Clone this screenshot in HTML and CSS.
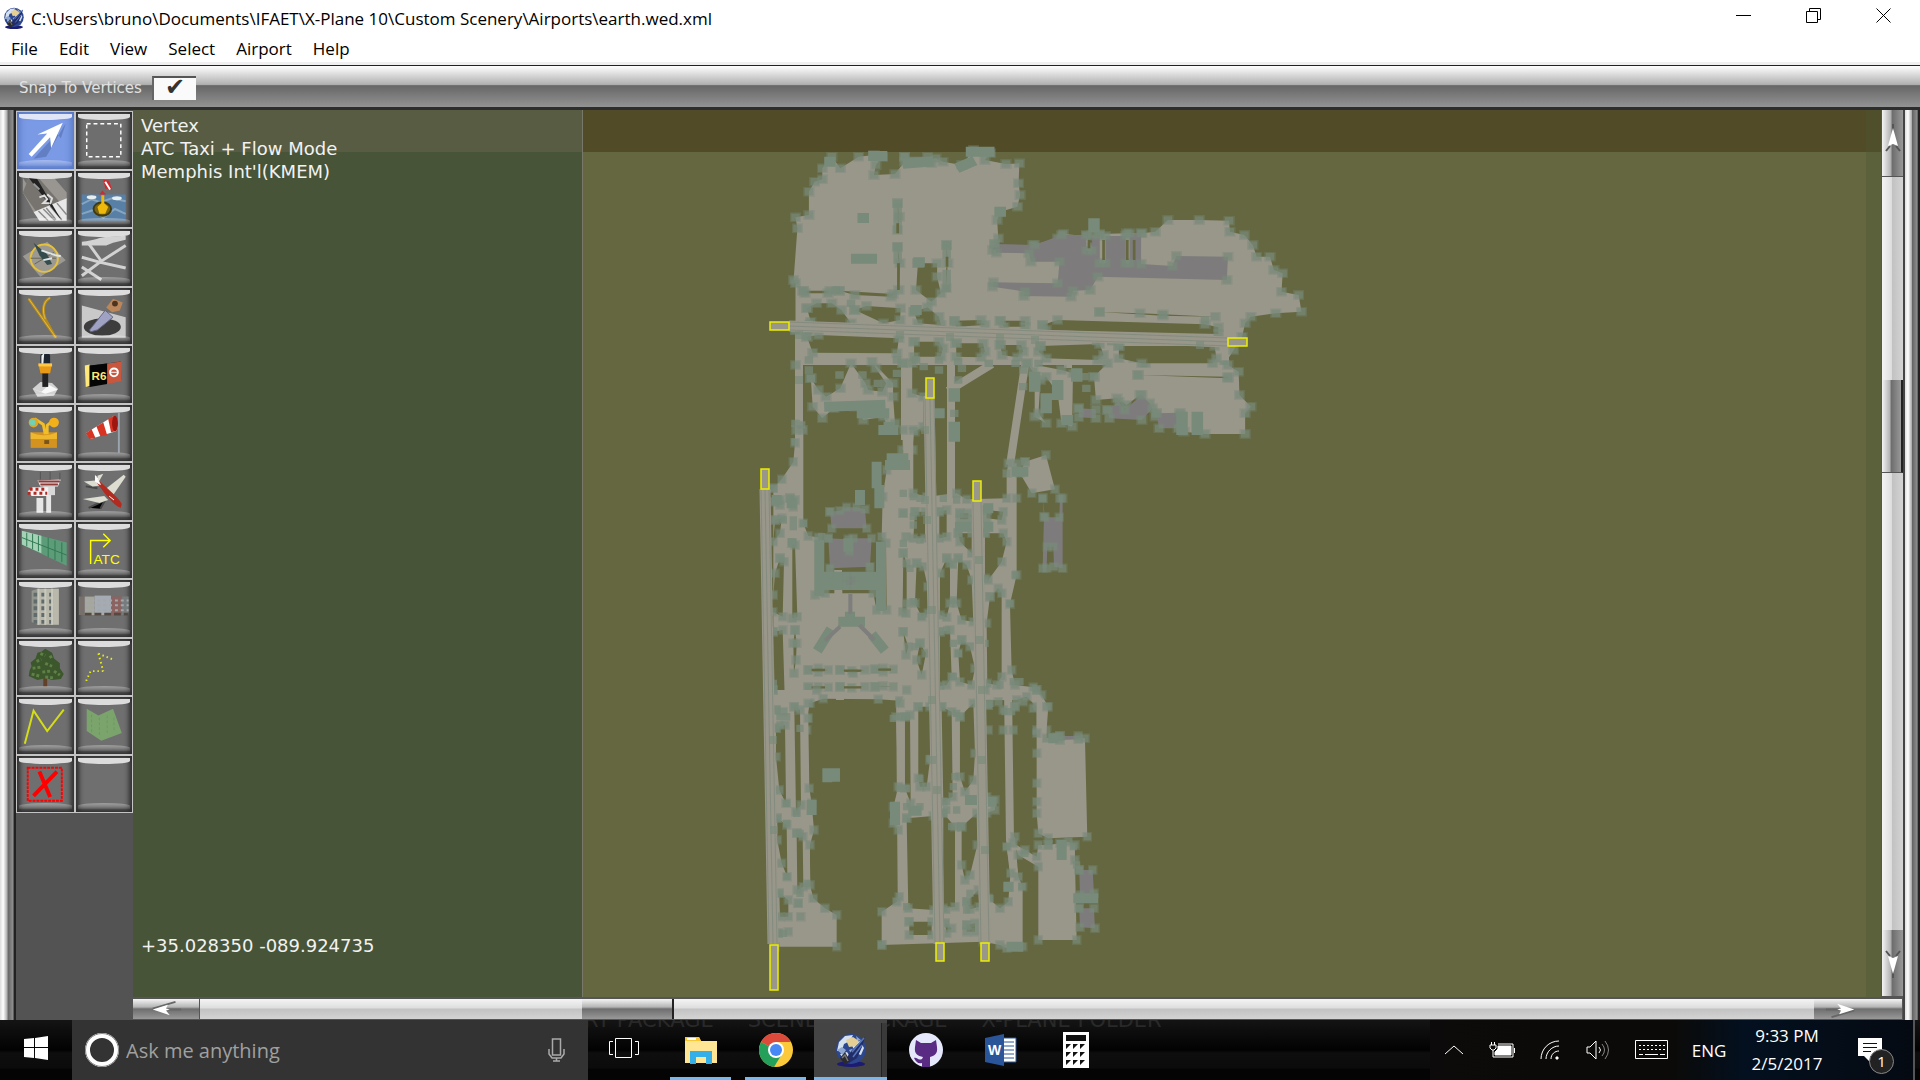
FILE: index.html
```
<!DOCTYPE html>
<html lang="en">
<head>
  <meta charset="UTF-8">
  <title>C:\Users\bruno\Documents\IFAET\X-Plane 10\Custom Scenery\Airports\earth.wed.xml</title>
  <link rel="stylesheet" href="styles.css">
</head>
<body>
  <svg class="defs" aria-hidden="true">
    <symbol id="earth" viewBox="0 0 34 34">
      <ellipse cx="17" cy="31" rx="14" ry="3" fill="#1b1b73"/>
      <circle cx="17" cy="16" r="15" fill="#2c478f"/>
      <path d="M5 9l6-6 8-1-3 6-6 3-2 6-5 1zM18 12l8-4 4 7-3 7-6-2zM6 21l7-2 3 5-4 5z" fill="#d5e0ee"/>
      <path d="M3 17l5-3 4 3-3 5zM15 17l6-2-3 7zM22 3l6 5-5-1z" fill="#8fa7d0"/>
      <path d="M12 7l7-3 6 4-3 5-7 1z" fill="#e5cf94"/>
      <path d="M31 4L18 17l-7 10 4 3 8-5 5-11z" fill="#232c66"/>
      <path d="M30 5L18 19M28 12l-9 12" fill="none" stroke="#5277be" stroke-width="1.500"/>
      <path d="M6 25l5-6 5 9-5 4z" fill="#2a2a2e"/>
      <path d="M8 25l3-3 3 6" fill="none" stroke="#777" stroke-width="1.500"/>
    </symbol>
    <symbol id="arrow-left" viewBox="0 0 40 20">
      <path d="M30 2L6 9M22 10h14" stroke="#666" stroke-width="2"/>
      <path d="M6 10l16-5-2 4 4 1-4 1 4 5z" fill="#fff"/>
    </symbol>
    <symbol id="arrow-up" viewBox="0 0 20 40">
      <path d="M10 3v9M3 30l4-5m10 5l-4-5" stroke="#555" stroke-width="2"/>
      <path d="M10 7l5 18-5-2-5 2z" fill="#fff"/>
    </symbol>
  </svg>

  <header class="titlebar">
    <svg class="app-icon"><use href="#earth"/></svg>
    <span class="title">C:\Users\bruno\Documents\IFAET\X-Plane 10\Custom Scenery\Airports\earth.wed.xml</span>
    <button class="win" aria-label="Minimize"><svg width="16" height="16"><path d="M0 7.500h15"/></svg></button>
    <button class="win" aria-label="Restore"><svg width="16" height="16"><path d="M.5 3.500h11v11h-11zM3.500 3.500v-3h11v11h-3"/></svg></button>
    <button class="win" aria-label="Close"><svg width="16" height="16"><path d="M.5.500l14 14m0-14l-14 14"/></svg></button>
  </header>

  <nav class="menu">
    <button>File</button>
    <button>Edit</button>
    <button>View</button>
    <button>Select</button>
    <button>Airport</button>
    <button>Help</button>
  </nav>

  <div class="toolbar">
    <label for="snap">Snap To Vertices</label>
    <input type="checkbox" id="snap" checked>
  </div>

  <main class="editor">
    <div class="frame left"></div>

    <div class="palette">
      <div class="tools">
        <button class="tool active" aria-label="Vertex"><svg viewBox="0 0 58 58">
          <path d="M17 48l24-26 4 5 5-15-2 3-18 31" fill="#4a63a0" opacity=".5"/>
          <path d="M12 43l19-21-10 1 26-12-12 26-1-11-19 20z" fill="#fff"/></svg></button>
        <button class="tool" aria-label="Marquee"><svg viewBox="0 0 58 58">
          <rect x="11" y="12" width="35" height="34" fill="#6e6e6e" stroke="#fff" stroke-width="1.500" stroke-dasharray="4 3"/></svg></button>
        <button class="tool" aria-label="Runway"><svg viewBox="0 0 58 58">
          <path d="M6 7l6 10-6 6v-8M12 7h26l13 15v8L17 42 6 22z" fill="#999590"/>
          <path d="M12 7h10l22 25-24 10L6 22z" fill="#777470"/>
          <path d="M17 42l34-14v23H23z" fill="#e8e8e8"/>
          <path d="M22 41l10 10m-5-12l12 12m-5-15l12 14m-5-17l10 12M30 38l10 12" stroke="#8a8a8a" stroke-width="1.500"/>
          <path d="M12 7h8l26 44-7-9z" fill="#222"/>
          <path d="M17 13l6 6" stroke="#999" stroke-width="2"/>
          <path d="M23 27l5-2 3 4-4 4 6 0m-2-9l5 4-2 6" stroke="#ddd" stroke-width="2" fill="none"/></svg></button>
        <button class="tool" aria-label="Sealane"><svg viewBox="0 0 58 58">
          <path d="M6 24h45v27H6z" fill="#587fa5"/>
          <path d="M6 34l10-5 9 3 12-4 14 3M6 44l12-4 10 8 12-9 11 5" fill="none" stroke="#86a6c0" stroke-width="2"/>
          <ellipse cx="16" cy="27" rx="5" ry="2" fill="#e8eff0"/><ellipse cx="42" cy="28" rx="5" ry="2" fill="#e8eff0"/>
          <ellipse cx="27" cy="39" rx="9" ry="7" fill="#7a6514" stroke="#413b12" stroke-width="2"/>
          <path d="M26 25h3v8l4 4-3 7h-6l-2-7 4-4z" fill="#eeb90d"/>
          <path d="M24 24l3-4 4 4zM28 9l6 1 3 9-7-1zM34 17l3 5" fill="#d8262d"/>
          <path d="M30 11l5 8" stroke="#fff" stroke-width="2"/></svg></button>
        <button class="tool" aria-label="Helipad"><svg viewBox="0 0 58 58">
          <path d="M6 28l25-15 19 19-26 17z" fill="#9b9992"/>
          <circle cx="28" cy="30" r="14" fill="none" stroke="#e6c13c" stroke-width="2"/>
          <path d="M14 30h26M18 36l20-12" stroke="#686654"/>
          <path d="M17 14l14 12 5 10-5 1-8-10z" fill="#354c4d"/>
          <path d="M25 22l15 5 5 1M27 32l9-2" stroke="#dfe6e6" stroke-width="2"/></svg></button>
        <button class="tool" aria-label="Taxiway"><svg viewBox="0 0 58 58">
          <path d="M6 13c14-1 20-6 29-5l16-1v4L38 14 31 17H6z" fill="#d2d2d2"/>
          <path d="M13 15l13 18 25-16M6 29l18 5 27 6M26 33L6 48M6 39l20 13" fill="none" stroke="#d2d2d2" stroke-width="3"/></svg></button>
        <button class="tool" aria-label="Taxiline"><svg viewBox="0 0 58 58">
          <path d="M12 11l28 40M34 10c-8 4-8 14-5 22l10 18" fill="none" stroke="#b68b1c" stroke-width="3"/>
          <path d="M12 11l28 40M34 10c-8 4-8 14-5 22" fill="none" stroke="#e5bd42"/></svg></button>
        <button class="tool" aria-label="Hole"><svg viewBox="0 0 58 58">
          <path d="M6 18l45 12v21H6z" fill="#c9c9c9"/>
          <ellipse cx="27" cy="40" rx="19" ry="9" fill="#3d3d3d"/>
          <path d="M14 43l16-20 8 7-16 13-7 2z" fill="#a0a2c4" stroke="#646683"/>
          <path d="M31 20l7-9 10 4-3 8-8 2z" fill="#bb865a"/><circle cx="40" cy="16" r="3" fill="#4d3421"/></svg></button>
        <button class="tool" aria-label="Tower Viewpoint"><svg viewBox="0 0 58 58">
          <path d="M16 44l8-7 12 1 6 6-4 7-17 1z" fill="#d2d2d2"/>
          <path d="M16 44l9 3 8-7 9 5-13 4z" fill="#f8f8f8"/>
          <path d="M26 28h6v14h-6z" fill="#222"/>
          <path d="M24 10c1-4 10-4 10 0v11H24z" fill="#1d2630"/><path d="M25 10l3-3-1 12h-2z" fill="#eee"/>
          <path d="M22 18h14l-2 10H24z" fill="#e89a16"/><path d="M22 18h14v3H22z" fill="#ffc746"/></svg></button>
        <button class="tool" aria-label="Sign"><svg viewBox="0 0 58 58">
          <path d="M9 21l37-5 1 19-35 7z" fill="#303030"/>
          <path d="M9 20l5-1v22l-4 1z" fill="#ffe879"/>
          <path d="M14 20l18-2v21l-18 3z" fill="#050505"/>
          <path d="M32 18l15-2v20l-15 3z" fill="#c9573d"/>
          <text x="16" y="35" class="r6">R6</text>
          <circle cx="39" cy="27" r="4" fill="none" stroke="#fff" stroke-width="2"/><path d="M36 27h6" stroke="#fff"/></svg></button>
        <button class="tool" aria-label="Beacon"><svg viewBox="0 0 58 58">
          <path d="M14 28h27v16H14z" fill="#d3931e"/><path d="M14 28c8 4 19 4 27 0v7H14z" fill="#eeb72d"/>
          <path d="M18 14l9 6 2 10M37 16l-6 5v9" stroke="#f2bd26" stroke-width="3" fill="none"/>
          <circle cx="17" cy="18" r="5" fill="#dea725"/><circle cx="16" cy="18" r="3" fill="#6dd2b7"/>
          <circle cx="38" cy="18" r="5" fill="#f2b01b"/><rect x="28" y="36" width="5" height="4" fill="#78541c"/></svg></button>
        <button class="tool" aria-label="Windsock"><svg viewBox="0 0 58 58">
          <path d="M44 8v41" stroke="#9aa5b0" stroke-width="2"/>
          <path d="M10 29l29-18c5 2 5 12 2 16l-26 8z" fill="#fff"/>
          <path d="M10 29l6-4 4 9-6 1zM21 22l7-4 4 13-7 1zM33 14l6-3c5 2 5 12 2 16l-5 1z" fill="#d83424"/>
          <ellipse cx="40" cy="19" rx="3" ry="8" fill="#9d1710"/></svg></button>
        <button class="tool" aria-label="Airport Buildings"><svg viewBox="0 0 58 58">
          <path d="M20 36h7v15h-7zM30 30h5v21h-5z" fill="#e6e6e6"/>
          <path d="M27 24h12v9H27z" fill="#d8d8d8"/>
          <path d="M21 18l24-1-3 7H24z" fill="#efefef"/><path d="M22 19h22M24 22h18" stroke="#8f3b36" stroke-width="2"/>
          <path d="M24 9v8m10-8v8m10-7v7" stroke="#555"/>
          <path d="M11 29l5-4h16v9H15z" fill="#f3f3f3"/><path d="M13 27h18m-20 4h20" stroke="#b42822" stroke-width="3" stroke-dasharray="3 3"/></svg></button>
        <button class="tool" aria-label="Ramp Start"><svg viewBox="0 0 58 58">
          <path d="M13 46l17-8-5 9M10 24l12 2" stroke="#484848" stroke-width="2"/>
          <path d="M8 19l12-1 5 5-8 1zM22 13l6-2-5 9zM30 27l19-15 2 2-13 19zM7 37l22-3 4 4-9 3z" fill="#ddddd2"/>
          <path d="M20 13c2 6 23 20 27 29l-1 4c-8-2-19-18-26-28z" fill="#b22b20"/>
          <path d="M20 13c3 3 3 6 5 9l-5-3zM34 34l5 4" fill="#fff" stroke="#fff"/></svg></button>
        <button class="tool" aria-label="Facade"><svg viewBox="0 0 58 58">
          <path d="M5 9l46 12v24L5 23z" fill="#5c9c79"/>
          <path d="M5 9l20 5v18L5 23z" fill="#a5d1b6"/>
          <path d="M10 11v14m6-13v16m6-14v16m10-14v20m7-17v20m7-18v20M5 16l46 18" stroke="#307850"/></svg></button>
        <button class="tool" aria-label="ATC Taxi + Flow"><svg viewBox="0 0 58 58">
          <path d="M15 43V19h20M28 12l7 7-7 7" fill="none" stroke="#ff0" stroke-width="1.500"/>
          <text x="18" y="43" class="atc">ATC</text></svg></button>
        <button class="tool" aria-label="Object"><svg viewBox="0 0 58 58">
          <path d="M15 11l6-2v37l-6-3z" fill="#92958d"/><path d="M21 9h22v37H21z" fill="#b9b8ab"/>
          <path d="M17 15h24m-24 7h24m-24 7h24m-24 7h24m-24 7h24" stroke="#616b6c" stroke-width="4" stroke-dasharray="4 4"/>
          <path d="M22 9v37m7-37v37m7-37v37" stroke="#c8c9bf" stroke-width="2"/></svg></button>
        <button class="tool" aria-label="Autogen"><svg viewBox="0 0 58 58">
          <path d="M3 17h50v19H3z" fill="#776f6c"/><path d="M9 17h10v19H9z" fill="#a5a79c"/>
          <path d="M19 16h17v20H19z" fill="#a5abb2"/><path d="M36 17h11v19H36z" fill="#8b6360"/><path d="M47 17h7v19h-7z" fill="#777d7f"/>
          <path d="M10 21h44M10 26h44M10 31h44" stroke="#a4a8aa" stroke-width="2" stroke-dasharray="3 3"/>
          <path d="M9 35h45" stroke="#554a42" stroke-width="3" stroke-dasharray="7 3"/></svg></button>
        <button class="tool" aria-label="Forest"><svg viewBox="0 0 58 58">
          <path d="M27 38h4v11h-4z" fill="#62412b"/>
          <path d="M29 10l7 4 2 6 6 5v5l4 6-3 5-9 1-6-2-9 2-9-4 1-6 2-4-1-4 5-4 2-6 4-1z" fill="#3c572b"/>
          <path d="M24 15l5 2m5 0l2 4m-16 2l5-2m4 4l7 3m-20 2l8-1m2 5l8-1m4 0l6 4m-29-1l8 2m6 1l9 1" stroke="#5f8047" stroke-width="3" stroke-dasharray="3 2"/></svg></button>
        <button class="tool" aria-label="String"><svg viewBox="0 0 58 58">
          <path d="M23 15l15 6M23 15l5 18M28 33H15l-5 11" fill="none" stroke="#e8ee1a" stroke-width="2" stroke-dasharray="1.500 3"/></svg></button>
        <button class="tool" aria-label="Line"><svg viewBox="0 0 58 58">
          <path d="M8 48l9-34 14 21 17-22" fill="none" stroke="#d4dd16" stroke-width="2"/></svg></button>
        <button class="tool" aria-label="Polygon"><svg viewBox="0 0 58 58">
          <path d="M11 12l12 7 15-7 9 25-21 8-15-10z" fill="#7ba46d"/>
          <path d="M16 18v18m8-15v20m8-22v20m7-18v14" stroke="#6c9860" stroke-dasharray="3 2"/></svg></button>
        <button class="tool" aria-label="Exclusion"><svg viewBox="0 0 58 58">
          <rect x="11" y="12" width="35" height="34" fill="none" stroke="#f00" stroke-width="2" stroke-dasharray="3 1"/>
          <path d="M23 16l11 26M41 16L17 41" fill="none" stroke="#f00" stroke-width="4"/></svg></button>
        <button class="tool" aria-label="Empty"></button>
      </div>
    </div>

    <aside class="info">
      <p>Vertex<br>ATC Taxi + Flow Mode<br>Memphis Int'l(KMEM)</p>
      <p>+35.028350 -089.924735</p>
    </aside>

    <div class="map">
      <svg viewBox="583 110 1298 887" preserveAspectRatio="xMinYMin meet">
        <defs>
          <marker id="v" markerUnits="userSpaceOnUse" markerWidth="30" markerHeight="30" refX="15" refY="15">
            <rect width="30" height="30" class="halo"/><rect x="4" y="4" width="22" height="22" class="vertex"/>
          </marker>
        </defs>

        <!-- taxiways -->
        <g class="strips">
          <path class="taxi" d="M799 330v120M905 260v180M951 600v100M951 260v240M838 570l2 130M1025 365l-15 100M992 364l-44 27M1068 330v38M1110 330v38M1225 330v38M789 540l3 400M803 690l4 230M900 690l2 240M914 690l1 120M956 690l2 230M1008 690l2 150 8 70"/>
        </g>

        <!-- north side -->
        <g transform="translate(740 130) scale(.3827 .3333)" marker-start="url(#v)" marker-mid="url(#v)" marker-end="url(#v)">
          <path class="pave" d="M145 600V460L140 450 150 295 145 262 180 255 180 185 195 155 215 148 215 115 240 80 262 115 310 80 350 75 372 82 355 105 350 135 405 132 430 95 470 95 512 85 530 95 580 105 610 60 655 70 640 90 695 102 730 100 728 160 732 195 725 230 680 245 672 270 675 325 660 360 765 345 830 325 845 312 905 318 920 350 940 312 1010 310 1050 310 1085 305 1118 270 1200 270 1278 272 1280 305 1318 315 1340 345 1350 380 1385 380 1395 420 1418 430 1415 485 1460 495 1467 545 1400 550 1335 560 1320 580 1312 620 1290 660 1265 705H145z"/>
          <path class="pave" d="M925 740L960 700 1030 685 1060 700 1275 705 1303 725 1305 795 1335 830 1320 850 1320 912H1215L1160 905 1150 855 1085 860 1070 820 1045 795 1010 825 985 805 930 810z"/>
          <path class="pave" d="M185 745L205 780 225 800 262 775 290 700 328 760 335 780 372 785 382 760 355 715 345 695 400 760 400 800 405 880 388 900 375 860 322 870 300 830 245 835 215 865 190 830z"/>
          <path class="pave" d="M425 700H450L450 790 480 800 480 890 455 905 450 960H425z"/>
          <path class="pave" d="M750 700L840 720 870 730 868 890 840 880 830 790 800 740 785 750 780 850 800 880 770 860 770 770 765 725z"/>
          <path class="hole" d="M465 400L515 400 515 440 525 490 500 515 460 480zM165 482L235 482 230 490 170 490zM260 482L400 492 395 500 300 495zM175 535L200 520 240 520 265 540 290 580 185 575zM300 540L330 528 420 535 418 570 375 580zM455 545L490 532 520 560 525 585 465 580zM560 572L630 570 640 585 565 590zM680 572L745 572 745 590 690 590zM790 585L830 570 1215 583 1250 592 1250 612 800 600z"/>
          <path class="hole" d="M175 620L205 615 415 625 410 670 190 668zM455 635L520 635 530 655 525 680 455 680zM565 640L635 640 640 665 630 682 565 680zM680 645L735 645 740 665 725 682 685 675zM785 648L940 642 950 675 935 690 800 685 780 665zM990 648L1240 648 1245 685 1235 700 1050 700 990 685zM940 546L1045 550 1105 553 1242 560 1105 557zM1040 735L1275 740 1275 745zM412 220L416 260 412 300zM412 350L418 400 415 480zM540 345L543 400 538 475z"/>
          <path class="building" d="M665 342L770 345 840 315H905V362H920V315H940V400H955V318H1008V400H1018V310H1048V402L1130 408 1140 378 1275 380 1272 450 935 440 915 480 870 482 865 500 742 498 745 485 660 470 662 457 830 460 835 395 760 395 755 370 670 368z"/>
          <path class="building" d="M885 835L930 838 930 865 885 862zM960 840L990 815 1005 840 1050 795 1078 835 1050 870 965 865zM1088 850L1150 848 1145 895 1095 895zM430 80L490 80 500 100 440 100z"/>
          <path class="clump" d="M322 264h0M305 386h38M468 397h0M925 280v12M680 245h0M350 78h20M605 65h45M440 100l50-5M580 108l20-10M235 830l130-5M320 850h55M390 890h0M770 740v30M800 805v30M830 765v30M855 870h0M880 730v10M1155 860v40M1195 860v40M235 95h0M460 540h0M560 790v10M520 850h0M560 890v30"/>
          <path class="ticks" d="M180 720h0M180 600h0M180 580h0M180 690h0M250 480h0M290 520h0M420 600h0M460 600h0M540 600h0M580 600h0M660 605h0M720 610h0M770 615h0M800 615h0M410 690h0M460 690h0M520 690h0M570 695h0M650 700h0M720 700h0M780 700h0M480 710h0M520 720h0M580 715h0M570 750h0M740 720h0M740 770h0M560 850h0M145 880h0M160 885h0M145 935h0M1215 570h0M1215 640h0M970 635h0M930 635h0M412 230v70M412 350v40M540 345v30M540 430v45M900 740h0M905 775h0M260 735h0M320 735h0M410 730h0M360 760h0"/>
          <path class="holeline" d="M950 330v60M1012 330v60M1030 330v60M912 330v25M412 280v30M414 400v80M541 380v30"/>
        </g>

        <!-- terminal -->
        <g transform="translate(740 430) scale(.3333)" marker-start="url(#v)" marker-mid="url(#v)" marker-end="url(#v)">
          <path class="pave" d="M100 175L125 148 160 95 165 38 168 0 190 0 190 280 205 318 235 322 225 495 255 490 400 490 410 540 440 540 438 340 425 320 428 200 440 120 490 100 490 0 520 0 520 190 560 200 650 190 680 208 800 205 800 130 805 100 830 100 830 205 830 435 810 522 815 720 825 765 880 772 905 795 925 830 920 900 890 900 890 830 860 800 830 810 480 812 415 808 250 806 210 820 200 865V900H100z"/>
          <path class="hole" d="M105 215L120 210 120 225zM150 205L165 210 160 230zM105 270L125 265 120 310 100 335zM120 385L132 395 128 560 98 545 100 495 105 430zM157 340L165 345 172 560 157 565zM100 605L128 600 135 830 105 835zM165 600L170 640 168 690 162 730 160 640zM158 845L175 840 180 900 162 900zM120 860L130 885zM490 250L498 320zM490 370L500 400 500 520 498 550 488 545zM525 245L555 245 555 325 520 325zM530 400L550 410 563 470 565 550 545 560 525 520zM490 605L505 650 498 675zM540 640L558 670 545 735 530 690zM598 245L620 240 620 320 598 325zM620 385L630 400 630 520 620 562 600 555 600 430zM655 385L680 405 695 450 700 575 665 570 650 520zM655 310H695V370L660 335zM660 250L685 250 685 268 660 268zM740 240L790 245 785 270 740 265zM735 310L790 310 800 335 785 395 745 450 735 445zM750 500L775 475 785 490 785 740 770 765 742 760 740 580zM600 605L630 600 635 740 620 765 600 768zM665 630L690 650 705 715 695 765 660 755 655 670z"/>
          <path class="hole" d="M600 830L620 815 635 830 640 900 605 900zM660 830L690 815 705 840 708 900 660 900zM745 825L775 815 790 840 790 900 745 900zM825 830L850 815 880 835 890 900 820 900zM535 830L560 815 570 900 535 900zM490 830L505 825 505 900 490 900z"/>
          <path class="hole" d="M205 720L235 715 265 720 235 727zM300 720L335 722 375 720 340 730zM405 718L430 715 460 718 430 725zM205 772L235 770 265 772zM300 770L335 773 375 770zM405 770L430 768 460 770z"/>
          <path class="holeline" d="M215 720h40M312 722h52M415 719h38M215 772h40M312 772h52"/>
          <path class="building" d="M270 245L300 242 320 232 350 232 375 238 380 295 275 295zM265 325L325 328 328 365 340 325 395 325 390 410 270 415z"/>
          <path class="building" d="M908 205L912 260 908 415 920 415 922 350 940 350 942 410 968 415 968 205 960 205 958 262 915 262z"/>
          <path class="pave" d="M855 95L918 75 945 178 875 190 840 130z"/>
          <path class="clump" d="M238 345v138M423 350v178M265 440h130M265 465h130M330 560l0 5M310 575h50M265 610l-25 40M405 625l20 25M455 85h35M450 105h45M410 110v50M418 180v40M830 125h20M745 290h0M745 235h0M660 290h20M360 195v15M110 210h0M155 220h0M430 0h30M325 340v10"/>
          <path class="ticks" d="M490 190h0M520 200h0M540 205h0M610 205h0M650 210h0M520 260h0M520 285h0M490 340h0M130 270h0M160 270v20M190 280h0M155 335h0M540 330h0M510 415h0M580 380h0M640 405h0M640 510h0M520 515h0M620 600h0M545 560h0M525 650h0M640 640h0M655 670h0M640 740h0M810 520h0M825 435h0M170 820h0M200 865h0M490 825h0M510 830h0M460 865h0M640 850h0M600 820h0M670 820h0M750 820h0M820 755h20M780 765h0M100 760h0M245 320h0M270 415v20M390 410v20M110 860h20M110 890h20M735 640h0"/>
          <path class="building" d="M318 440h28v25h-28z"/>
          <path class="road" d="M331 492v60M300 590l-45 42M358 585l45 45"/>
        </g>

        <!-- south side -->
        <g transform="translate(740 690) scale(.3333)" marker-start="url(#v)" marker-mid="url(#v)" marker-end="url(#v)">
          <path class="pave" d="M100 0H230L205 40 205 85 208 295 215 340 222 420 210 465 210 585 220 625 255 655 290 675 290 770H105z"/>
          <path class="pave" d="M425 765V665L470 635 478 620 475 420 460 400 460 350 475 290 468 80 480 40 500 0H735L740 320 765 330 765 360 740 370 745 625 780 655 805 635 808 590 812 550 800 470 825 440 835 560 848 590V770L800 775 780 765 730 755z"/>
          <path class="pave" d="M890 0L920 50 920 145 950 140 1035 145 1042 440 925 445 895 430 890 370 890 335 890 280 890 190 890 130z"/>
          <path class="pave" d="M925 465L960 460 985 455 1005 465 1005 510 1010 750H895L895 530 835 495 820 460 855 480 890 500 895 465z"/>
          <path class="hole" d="M108 60L130 65zM108 115L135 105 138 340 118 300 108 200zM163 50L180 60 183 345 168 365zM112 385L140 405 142 560 125 520 112 450zM170 430L188 440 190 590 172 600zM118 610L145 630 145 680 120 680zM115 730L145 725zM175 640L182 680z"/>
          <path class="hole" d="M495 80L510 75 512 340 495 295zM500 385L580 378 582 660 505 655zM535 50L570 50 570 210 560 290 540 290 535 265zM605 50L635 65 638 320 610 335zM660 80L700 40 705 190 700 270 675 305 660 260zM610 370L645 410 645 650 610 655zM665 410L710 370 712 465 690 555 675 570 665 525zM680 635L715 600 718 650 690 658zM508 695L575 695 575 735 508 735zM615 700L635 715 620 730zM680 705L705 700 705 725 680 725z"/>
          <path class="building" d="M1018 540L1058 540 1062 610 1020 615zM1018 655L1062 655 1065 715 1020 712zM960 138L1015 138 1015 148 960 150z"/>
          <path class="clump" d="M262 250v12M285 250v10M1015 625h45M965 465v30M940 145h0M215 345v15M465 350v40M755 335h0M690 330h20M520 362h10M805 590h0M815 770h20"/>
          <path class="ticks" d="M120 80h20M120 105h0M180 115h0M140 340h0M170 370h0M140 400h0M180 430h0M140 560h0M180 610h0M200 580h0M130 730h0M480 295h20M480 80h20M540 265h0M650 70h0M645 260h0M570 205h0M640 290h0M620 335h0M620 360h0M660 410h0M635 410h0M500 350h0M540 350h0M650 360h0M500 650h0M620 660h0M690 610h0M680 660h0M795 65h20M800 470h0M855 490h0M845 590h0M1010 525h0M1000 470h0M750 625h0"/>
        </g>

        <!-- runways -->
        <g class="strips">
          <path class="runway" d="M789 326l440 16M765 489l8 455M929 396l10 548M977 499l8 445"/>
          <path class="edge" d="M789 322l440 16M789 326l440 16M789 330l440 16M761 489l8 455M765 489l8 455M769 489l8 455M925 398l10 546M930 398l10 546M934 398l10 546M973 501l8 443M981 501l8 443"/>
          <path class="dots" d="M799 335v0M799 380v0M773 740v0M774 830v0M925 430v0M925 500v0M927 520v0M932 610v0M932 700v0M932 760v0M937 790v0M979 560v0M979 640v0M982 690v0M982 760v0M985 850v0M900 335v0M950 337v0M1000 338v0M1035 340v0M1200 345v0"/>
        </g>
        <path class="end" d="M770 322h19v8h-19zM1228 338h19v8h-19zM926 378h8v20h-8zM761 469h8v20h-8zM973 481h8v20h-8zM770 945h8v45h-8zM936 943h8v18h-8zM981 943h8v18h-8z"/>
      </svg>
      <div class="east"></div>
    </div>

    <div class="vscroll">
      <button aria-label="Scroll up"><svg><use href="#arrow-up"/></svg></button>
      <span class="track a"></span>
      <span class="thumb"></span>
      <span class="track b"></span>
      <button class="down" aria-label="Scroll down"><svg><use href="#arrow-up"/></svg></button>
    </div>
    <div class="frame right"></div>

    <div class="hscroll">
      <button aria-label="Scroll left"><svg><use href="#arrow-left"/></svg></button>
      <span class="track a"></span>
      <span class="thumb"></span>
      <span class="track b"></span>
      <button class="next" aria-label="Scroll right"><svg><use href="#arrow-left"/></svg></button>
    </div>
  </main>

  <footer class="taskbar">
    <div class="behind"><span>RY PACKAGE</span><span>SCENERY PACKAGE</span><span>X-PLANE FOLDER</span></div>
    <button class="start" aria-label="Start"><svg width="24" height="24"><path d="M0 3l10-1v9H0zM11 2l13-2v11H11zM0 12h10v10L0 21zM11 12h13v12l-13-2z" fill="#fff"/></svg></button>
    <div class="search">
      <span class="cortana"></span>
      <input type="text" placeholder="Ask me anything" aria-label="Ask me anything">
      <svg width="18" height="24"><path d="M4.500 1h8v16h-8zM1 11v5l3 4h9l3-4v-5M8.500 20v3M5 23h7" fill="none" stroke="#aaa" stroke-width="1.500"/></svg>
    </div>
    <button class="taskview" aria-label="Task View"><svg width="30" height="20"><path d="M6.500.500h16v19h-16zM4 3.500H.500v13H4M26 3.500h3.500v13H26" fill="none" stroke="#fff"/></svg></button>
    <div class="apps">
      <button class="running" aria-label="File Explorer"><svg width="34" height="28"><path d="M1 1h14l2 4h16v22H1z" fill="#ffe694"/><path d="M1 1h14l2 4H1z" fill="#fbc633"/><path d="M3 3h9" stroke="#fff" stroke-width="2"/><path d="M6 28V15h22v13h-6v-7H12v7z" fill="#35afe8"/></svg></button>
      <button class="running" aria-label="Chrome"><svg width="34" height="34" viewBox="0 0 34 34"><circle cx="17" cy="17" r="17" fill="#fbc93a"/><path d="M17 17L2 9a17 17 0 0 1 30 0H17z" fill="#dc4a3c"/><path d="M2 9a17 17 0 0 0 13 25l8-13-6-4z" fill="#24a05b"/><path d="M17 9h15L24 6z" fill="#dc4a3c"/><circle cx="17" cy="17" r="8" fill="#fff"/><circle cx="17" cy="17" r="6" fill="#4688f4"/></svg></button>
      <button class="running current" aria-label="WorldEditor"><svg width="34" height="34"><use href="#earth"/></svg></button>
      <button aria-label="GitHub"><svg width="34" height="34" viewBox="0 0 34 34"><circle cx="17" cy="17" r="17" fill="#e5e8fb"/><path d="M7 7l5 3h10l5-3 1 7c1 7-3 9-7 10v10h-8v-4c-4 1-6-1-8-5 3-1 4 3 8 1l1-2c-5-1-9-3-8-10z" fill="#5a2b83"/></svg></button>
      <button aria-label="Word"><svg width="32" height="32" viewBox="0 0 32 32"><path d="M17 4h14v24H17z" fill="#fff" stroke="#2a5699"/><path d="M19 8h10m-10 4h10m-10 4h10m-10 4h10m-10 4h10" stroke="#2a5699"/><path d="M0 4l19-4v32L0 28z" fill="#2a5699"/><text x="3" y="21" class="w">W</text></svg></button>
      <button aria-label="Calculator"><svg width="26" height="36" viewBox="0 0 26 36"><path d="M0 0h26v36H0z" fill="#fff"/><path d="M3 3h20v6H3zM3 12h5l-5 5zM10 12h5l-5 5zM17 12h5l-5 5zM3 20h5l-5 5zM10 20h5l-5 5zM17 20h5l-5 5zM3 28h5l-5 5zM10 28h5l-5 5zM17 28h5l-5 5z" fill="#111"/></svg></button>
    </div>
    <div class="tray">
      <button aria-label="Show hidden icons"><svg width="20" height="12"><path d="M1 10l9-8 9 8"/></svg></button>
      <button aria-label="Battery"><svg width="26" height="20"><path d="M1 5h6v3l-2 2H3L1 8zM2.500 2v3m3-3v3M4 10v7h20V4H9M25.500 8v5"/><path d="M9 6h13v9H6v-3l3-3z" fill="#fff"/></svg></button>
      <button aria-label="Network"><svg width="20" height="20"><path d="M1 19C1 9 9 1 19 1M6 19C6 12 12 6 19 6M11 19c0-5 4-8 8-8"/><path d="M16 17h2v2h-2z" fill="#fff"/></svg></button>
      <button aria-label="Volume"><svg width="24" height="20"><path d="M1 7h3l6-6v18l-6-6H1zM13 7q3 3 0 6"/><path d="M16 4q5 6 0 12M19 1q7 9 0 18" opacity=".5"/></svg></button>
      <button aria-label="Touch keyboard"><svg width="34" height="20"><path d="M.5.500h32v18H.500z"/><path d="M4 5.500h26M4 9.500h26" stroke-dasharray="2 2"/><path d="M4 14.500h4m2 0h13m2 0h5"/></svg></button>
      <button>ENG</button>
      <button class="clock">9:33 PM<br>2/5/2017</button>
      <button class="notes" aria-label="Notifications"><svg width="24" height="24"><path d="M0 0h24v18H12v6l-6-6H0z" fill="#fff" stroke="none"/><path d="M5 5.500h14M5 9.500h14M5 13.500h8" stroke="#111"/></svg><span class="badge">1</span></button>
    </div>
  </footer>
</body>
</html>
```
FILE: styles.css
```
* {
  box-sizing: border-box;
}
body {
  margin: 0;
  height: 100vh;
  display: flex;
  flex-direction: column;
  overflow: hidden;
  background: #fff;
  font-family: "Open Sans", "Noto Sans", sans-serif;
}
button {
  padding: 0;
  border: none;
  background: none;
  color: inherit;
  font: inherit;
}
p {
  margin: 0;
}
.defs {
  position: absolute;
  width: 0;
  height: 0;
}

/* window title and menu */
.titlebar {
  display: flex;
  align-items: center;
  height: 35px;
  padding-left: 3px;
  flex: none;
}
.app-icon {
  width: 22px;
  height: 22px;
}
.title {
  flex: 1;
  padding: 2px 0 0 6px;
  font-size: 17px;
  white-space: nowrap;
}
.win {
  width: 70px;
  height: 34px;
}
.win:last-child {
  margin-right: 1px;
}
.win svg {
  fill: none;
  stroke: #000;
}
.menu {
  display: flex;
  align-items: center;
  gap: 21px;
  height: 30px;
  padding-left: 11px;
  border-bottom: 3px solid #f0f0f0;
  font-size: 17px;
  line-height: 24px;
  flex: none;
}

/* snap bar */
.toolbar {
  display: flex;
  align-items: center;
  gap: 10px;
  height: 45px;
  padding: 3px 0 0 19px;
  border-top: 1px solid #222;
  border-bottom: 3px solid #2d2d2d;
  background: linear-gradient(#fff, #b0b0b0 45%, #666 48%, #939393);
  color: #e2e2e2;
  font: 15px "DejaVu Sans", sans-serif;
  flex: none;
}
.toolbar input {
  appearance: none;
  width: 44px;
  height: 24px;
  margin: 0;
  border-top: 2px solid #555;
  border-left: 2px solid #666;
  background: #fafafa;
  color: #333;
  font-size: 24px;
  line-height: 18px;
  text-align: center;
}
.toolbar input:checked::after {
  content: "✔";
}

/* editor area */
.editor {
  display: grid;
  grid-template-columns: 16px 117px 450px 1fr 22px 17px;
  grid-template-rows: 1fr 23px;
  flex: 1;
  min-height: 0;
}
.frame {
  grid-row: 1 / 3;
  background: linear-gradient(90deg, #ddd, #fff 20%, #aaa 45%, #666 50%, #8e8e8e 80%, #222 90%);
}
.frame.left {
  grid-column: 1;
}
.frame.right {
  grid-column: 6;
  grid-row: 1 / 3;
  border-left: 2px solid #444;
}
.palette {
  grid-column: 2;
  grid-row: 1 / 3;
  background: #535353;
}
.tools {
  display: grid;
  grid-template-columns: 1fr 1fr;
  padding-top: 1px;
}
.tool {
  position: relative;
  aspect-ratio: 1;
  border: 1px solid #c4c4c4;
  background: #6f6f6f;
  box-shadow: inset 0 0 5px 3px #2c2c2c;
}
.tool.active {
  background: #7b9ae6;
  box-shadow: inset 0 0 7px 2px #5372bd;
}
.tool svg {
  display: block;
  width: 100%;
  height: 100%;
}
.tool::before, .tool::after {
  content: "";
  position: absolute;
  left: 2px;
  right: 2px;
  height: 6px;
}
.tool::before {
  top: 2px;
  border-radius: 0 0 50% 50%;
  background: #dcdcdc;
}
.tool::after {
  bottom: 3px;
  border-radius: 50% 50% 0 0;
  background: linear-gradient(#fff5, #fff1);
}
.tool.active::before {
  background: #e0e6f8;
}
.r6 {
  fill: #ffe879;
  font: bold 12px "Liberation Sans", sans-serif;
}
.atc {
  fill: #ff0;
  font: 14px "Liberation Sans", sans-serif;
}

.info {
  display: flex;
  flex-direction: column;
  justify-content: space-between;
  padding: 4px 8px 40px;
  border-right: 1px solid #777868;
  background: linear-gradient(#585c43 42px, #475437 42px);
  color: #f2f2f2;
  font: 18px/23px "DejaVu Sans", sans-serif;
}
.map {
  position: relative;
  overflow: hidden;
  background: linear-gradient(#514b28 42px, #64673f 42px);
}
.map svg {
  display: block;
  width: 100%;
}
.east {
  position: absolute;
  top: 0;
  right: 0;
  bottom: 0;
  width: 15px;
  background: #4a5a3455;
}
.pave {
  fill: #99968a;
}
.hole {
  fill: #64673f;
}
.building {
  fill: #7e7b7c;
}
.vertex {
  fill: #788a7a;
  opacity: .6;
}
.halo {
  fill: #788a7a;
  opacity: .35;
}
.clump, .ticks {
  fill: none;
  stroke: #788a7a;
  stroke-width: 30;
  stroke-linecap: square;
  marker: none;
}
.ticks {
  stroke-width: 22;
  opacity: .75;
}
.holeline {
  fill: none;
  stroke: #64673f;
  stroke-width: 7;
  marker: none;
}
.road {
  fill: none;
  stroke: #7e7f7c;
  stroke-width: 12;
  marker: none;
}
.strips {
  fill: none;
  stroke: #99968a;
}
.taxi {
  stroke-width: 8;
}
.runway {
  stroke-width: 11;
}
.edge {
  stroke: #848c7f;
  stroke-width: 1;
}
.dots {
  stroke: #788a7a;
  stroke-width: 8;
  stroke-linecap: square;
  opacity: .6;
}
.end {
  fill: #99968a;
  stroke: #ee0;
  stroke-width: 1.500;
}

/* scroll bars */
.vscroll, .hscroll {
  --track: #f4f4f4, #dedede 45%, #c2c2c2 50%, #d4d4d4;
  --metal: #f4f4f4, #b5b5b5 40%, #6e6e6e 50%, #999;
  display: flex;
  border: 1px solid #555;
}
.vscroll {
  flex-direction: column;
  border-width: 0 0 0 1px;
  background: linear-gradient(90deg, var(--track));
}
.hscroll {
  grid-column: 3 / 6;
  grid-row: 2;
  border-width: 2px 0 1px;
  background: linear-gradient(var(--track));
}
.vscroll button, .vscroll .thumb {
  background: linear-gradient(90deg, var(--metal));
  border-bottom: 1px solid #555;
}
.hscroll button, .hscroll .thumb {
  background: linear-gradient(var(--metal));
  border-right: 1px solid #555;
}
.vscroll button {
  height: 67px;
}
.vscroll svg {
  width: 20px;
  height: 40px;
}
.vscroll .thumb {
  height: 93px;
  border-right: 2px solid #222;
}
.vscroll .a {
  flex: 203;
}
.vscroll .b {
  flex: 457;
}
.hscroll button {
  width: 67px;
}
.hscroll svg {
  width: 40px;
  height: 19px;
  display: block;
  margin: auto;
}
.hscroll .thumb {
  width: 92px;
  border-right: 2px solid #222;
}
.hscroll .a {
  width: 382px;
}
.hscroll .b {
  flex: 1;
}
.hscroll .next {
  width: 89px;
  padding-right: 34px;
}
.down svg, .next svg {
  transform: rotate(180deg);
}

/* taskbar */
.taskbar {
  position: relative;
  display: flex;
  height: 60px;
  background: linear-gradient(#141414, #020202 50%, #0e0e0e 55%, #0b0b0b 80%, #040404 82%);
  color: #fff;
  flex: none;
}
.taskbar > * {
  position: relative;
}
.taskbar > .behind {
  position: absolute;
  top: -10px;
  left: 584px;
  display: flex;
  gap: 34px;
  clip-path: inset(10px 0 0 0);
  color: #292929;
  font: 21px/20px "DejaVu Sans", sans-serif;
  white-space: nowrap;
}
.start {
  width: 72px;
}
.search {
  display: flex;
  align-items: center;
  width: 516px;
  padding: 0 22px 0 13px;
  background: #333;
}
.cortana {
  width: 34px;
  height: 34px;
  border: 5px solid #fff;
  border-radius: 50%;
  outline: 1px solid #888;
  outline-offset: -1px;
}
.search input {
  flex: 1;
  min-width: 0;
  padding: 0 7px;
  border: none;
  background: none;
  color: #fff;
  font: 20px "Open Sans", sans-serif;
}
.search input::placeholder {
  color: #a0a0a0;
}
.taskview {
  width: 72px;
  margin-right: 3px;
}
.apps {
  display: flex;
}
.apps button {
  display: flex;
  align-items: center;
  justify-content: center;
  width: 75px;
}
.apps .running {
  width: 61px;
  margin: 0 7px;
  border-bottom: 3px solid #76b9ed;
  border-top: 3px solid transparent;
}
.apps .current {
  width: 73px;
  margin: 0 1px;
  border-top-color: #454545;
  background: linear-gradient(90deg, #444 67px, #222 67px, #222 68px, #3a3a3a 68px);
}
.w {
  fill: #fff;
  font: bold 14px "Liberation Sans", sans-serif;
}
.tray {
  display: grid;
  grid-template-columns: 48px 48px 48px 48px 60px 54px 102px 64px;
  margin-left: auto;
  margin-right: 5px;
  padding-right: 11px;
  border-right: 2px solid #555;
  background: linear-gradient(90deg, #0c0a0a, #0b0a08 50%, #03101f 65%, #050a12);
  font-size: 17px;
}
.tray button {
  display: flex;
  align-items: center;
  justify-content: center;
}
.tray svg {
  fill: none;
  stroke: #fff;
}
.clock {
  line-height: 28px;
}
.notes {
  position: relative;
}
.badge {
  position: absolute;
  left: 31px;
  top: 29px;
  width: 25px;
  height: 25px;
  border: 1px solid #888;
  border-radius: 50%;
  background: #222;
  font-size: 15px;
  line-height: 23px;
}
```
